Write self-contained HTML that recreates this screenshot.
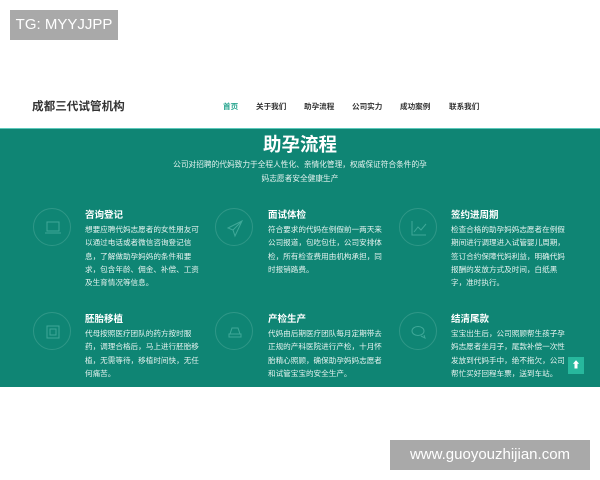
<!DOCTYPE html>
<html><head><meta charset="utf-8"><style>
*{margin:0;padding:0;box-sizing:border-box}
body{width:600px;height:480px;background:#fff;position:relative;overflow:hidden;font-family:"Liberation Sans","Noto Sans CJK SC",sans-serif}
.wm{position:absolute;background:#a9a9a9;color:#fff;font-size:15px;line-height:30px;text-align:center}
.logo{position:absolute;left:32px;top:98px;font-size:11.6px;font-weight:bold;color:#333}
.nav{position:absolute;top:101px;font-size:7.6px;color:#333;font-weight:bold}
.band{position:absolute;left:0;top:128px;width:600px;height:259px;background:#0f8574;border-top:1px solid #5cc9bb}
.t{position:absolute;left:0;width:600px;text-align:center;color:#fff}
.h{position:absolute;color:#fff;font-size:9.5px;font-weight:bold}
.p{position:absolute;color:#e6f3f0;font-size:7.6px;line-height:13.3px;width:118px}
.c{position:absolute;width:38px;height:38px;border:1px solid #2f9787;border-radius:50%}
.c svg{position:absolute;left:9px;top:9px}
.up{position:absolute;left:568px;top:357px;width:16px;height:17px;background:#27b89d;color:#fff;font-size:9px;text-align:center;line-height:17px}
</style></head><body>
<div class="wm" style="left:10px;top:10px;width:108px">TG: MYYJJPP</div>
<div class="logo">成都三代试管机构</div>
<div class="nav" style="left:223px;color:#2aa690">首页</div>
<div class="nav" style="left:256px">关于我们</div>
<div class="nav" style="left:304px">助孕流程</div>
<div class="nav" style="left:352px">公司实力</div>
<div class="nav" style="left:400px">成功案例</div>
<div class="nav" style="left:449px">联系我们</div>
<div class="band">
<div class="t" style="top:2px;font-size:18.5px;font-weight:bold">助孕流程</div>
<div class="t" style="top:29px;font-size:7.7px;line-height:13.5px;color:#e6f3f0">公司对招聘的代妈致力于全程人性化、亲情化管理，权威保证符合条件的孕<br>妈志愿者安全健康生产</div>
</div>
<div class="c" style="left:33px;top:208px"><svg width="20" height="20" viewBox="0 0 20 20" fill="none" stroke="#3fa898" stroke-width="1"><rect x="4" y="4" width="12" height="9"/><path d="M2 15h16"/></svg></div>
<div class="c" style="left:215px;top:208px"><svg width="20" height="20" viewBox="0 0 20 20" fill="none" stroke="#3fa898"><path d="M17 3L3 10l5 2 2 6z M8 12l9-9"/></svg></div>
<div class="c" style="left:399px;top:208px"><svg width="20" height="20" viewBox="0 0 20 20" fill="none" stroke="#3fa898"><path d="M3 3v14h14 M5 14l4-5 3 3 5-6"/></svg></div>
<div class="c" style="left:33px;top:312px"><svg width="20" height="20" viewBox="0 0 20 20" fill="none" stroke="#3fa898"><rect x="4" y="4" width="12" height="12"/><rect x="7" y="7" width="6" height="6"/></svg></div>
<div class="c" style="left:215px;top:312px"><svg width="20" height="20" viewBox="0 0 20 20" fill="none" stroke="#3fa898"><path d="M5 12l2-6h6l2 6z M4 12h12v3H4z"/></svg></div>
<div class="c" style="left:399px;top:312px"><svg width="20" height="20" viewBox="0 0 20 20" fill="none" stroke="#3fa898"><ellipse cx="9" cy="9" rx="6" ry="4.5"/><path d="M12 14l4 2-1-3"/></svg></div>
<div class="h" style="left:85px;top:207px">咨询登记</div>
<div class="p" style="left:85px;top:223px">想要应聘代妈志愿者的女性朋友可以通过电话或者微信咨询登记信息，了解做助孕妈妈的条件和要求，包含年龄、佣金、补偿、工资及生育情况等信息。</div>
<div class="h" style="left:268px;top:207px">面试体检</div>
<div class="p" style="left:268px;top:223px">符合要求的代妈在例假前一两天来公司报道，包吃包住，公司安排体检，所有检查费用由机构承担，同时报销路费。</div>
<div class="h" style="left:451px;top:207px">签约进周期</div>
<div class="p" style="left:451px;top:223px">检查合格的助孕妈妈志愿者在例假期间进行调理进入试管婴儿周期，签订合约保障代妈利益，明确代妈报酬的发放方式及时间，白纸黑字，准时执行。</div>
<div class="h" style="left:85px;top:311px">胚胎移植</div>
<div class="p" style="left:85px;top:327px">代母按照医疗团队的药方按时服药，调理合格后，马上进行胚胎移植，无需等待，移植时间快，无任何痛苦。</div>
<div class="h" style="left:268px;top:311px">产检生产</div>
<div class="p" style="left:268px;top:327px">代妈由后期医疗团队每月定期带去正规的产科医院进行产检，十月怀胎精心照顾，确保助孕妈妈志愿者和试管宝宝的安全生产。</div>
<div class="h" style="left:451px;top:311px">结清尾款</div>
<div class="p" style="left:451px;top:327px">宝宝出生后，公司照顾帮生孩子孕妈志愿者坐月子，尾款补偿一次性发放到代妈手中，绝不拖欠，公司帮忙买好回程车票，送到车站。</div>
<div class="up">⬆</div>
<div class="wm" style="left:390px;top:440px;width:200px">www.guoyouzhijian.com</div>
</body></html>
